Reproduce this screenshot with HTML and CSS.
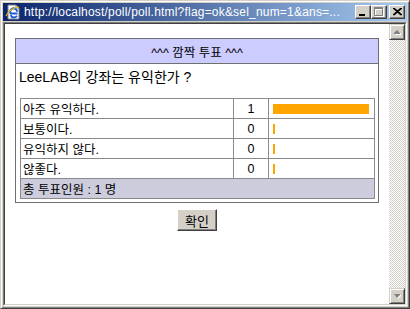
FILE: index.html
```html
<!DOCTYPE html>
<html lang="ko">
<head>
  <meta charset="UTF-8">
  <title>깜짝 투표</title>
  <link rel="stylesheet" href="styles.css">
</head>
<body>
  <div class="window">
    <div class="titlebar">
      <svg class="app-icon" width="16" height="16" viewBox="0 0 16 16">
        <path d="M3 1h8l3 3v11H3z" fill="#fff" stroke="#808080"/>
        <path d="M11 1v3h3" fill="none" stroke="#808080"/>
        <path d="M12.5 9.5H5.5a3.5 3.5 0 1 1 6.6-1.8M12 11.8a3.6 3.6 0 0 1-6.4-0.6" fill="none" stroke="#1e5bd6" stroke-width="2"/>
        <path d="M1 12c2-5 8-9 13-9" fill="none" stroke="#f0c000" stroke-width="1.2"/>
      </svg>
      <span class="title-text">http://localhost/poll/poll.html?flag=ok&amp;sel_num=1&amp;ans=...</span>
      <div class="title-buttons">
        <div class="tbtn">
          <svg width="8" height="7" viewBox="0 0 8 7"><rect x="0" y="5" width="6" height="2" fill="#000"/></svg>
        </div>
        <div class="tbtn">
          <svg width="10" height="10" viewBox="0 0 10 10">
            <path d="M1.5 1.5h8v8h-8z M1.5 2.5h8" fill="none" stroke="#fff"/>
            <path d="M0.5 0.5h8v8h-8z M0.5 1.5h8" fill="none" stroke="#808080"/>
          </svg>
        </div>
        <div class="tbtn close">
          <svg width="9" height="8" viewBox="0 0 9 8">
            <path d="M0 0l8 7M1 0l8 7M8 0L0 7M9 0L1 7" stroke="#000" stroke-width="1.1"/>
          </svg>
        </div>
      </div>
    </div>

    <div class="client">
      <div class="client-inner">
        <div class="page">
          <table class="poll">
            <tr><th class="poll-head">^^^ 깜짝 투표 ^^^</th></tr>
            <tr><td class="question">LeeLAB의 강좌는 유익한가 ?</td></tr>
            <tr>
              <td class="result-cell">
                <table class="results">
                  <tr>
                    <td class="answer">아주 유익하다.</td>
                    <td class="count">1</td>
                    <td class="bar-cell"><div class="bar" style="width: 96px"></div></td>
                  </tr>
                  <tr>
                    <td class="answer">보통이다.</td>
                    <td class="count">0</td>
                    <td class="bar-cell"><div class="bar" style="width: 2px"></div></td>
                  </tr>
                  <tr>
                    <td class="answer">유익하지 않다.</td>
                    <td class="count">0</td>
                    <td class="bar-cell"><div class="bar" style="width: 2px"></div></td>
                  </tr>
                  <tr>
                    <td class="answer">않좋다.</td>
                    <td class="count">0</td>
                    <td class="bar-cell"><div class="bar" style="width: 2px"></div></td>
                  </tr>
                  <tr>
                    <td class="total" colspan="3">총 투표인원 : 1 명</td>
                  </tr>
                </table>
              </td>
            </tr>
          </table>
          <div class="actions">
            <button class="ok-btn">확인</button>
          </div>
        </div>

        <div class="scrollbar">
          <div class="sbtn">
            <svg width="7" height="5" viewBox="0 0 7 5">
              <path d="M4 1l3 3v1H1V4z" fill="#fff"/>
              <path d="M3 0l3 3v1H0V3z" fill="#808080"/>
            </svg>
          </div>
          <div class="track"></div>
          <div class="sbtn">
            <svg width="7" height="5" viewBox="0 0 7 5">
              <path d="M1 1h6v1L4 5z" fill="#fff"/>
              <path d="M0 0h6v1L3 4z" fill="#808080"/>
            </svg>
          </div>
        </div>
      </div>
    </div>
  </div>
</body>
</html>
```

FILE: styles.css
```css
html, body {
  margin: 0;
  padding: 0;
}

body {
  background: #d4d0c8;
  font-family: "Liberation Sans", "Noto Sans CJK KR", sans-serif;
  font-size: 12px;
}

/* window frame */
.window {
  width: 410px;
  height: 309px;
  box-sizing: border-box;
  display: flex;
  flex-direction: column;
  background: #d4d0c8;
  border: 1px solid;
  border-color: #d4d0c8 #404040 #404040 #d4d0c8;
  box-shadow: inset 1px 1px #fff, inset -1px -1px #808080;
  padding: 2px;
}

.titlebar {
  height: 18px;
  display: flex;
  align-items: center;
  background: linear-gradient(to right, #0a246a, #a6caf0);
  color: #fff;
  padding-left: 2px;
}

.app-icon {
  flex: none;
  margin-right: 3px;
}

.title-text {
  flex: 1;
  white-space: nowrap;
  overflow: hidden;
  font-size: 12px;
  letter-spacing: 0.2px;
}

.title-buttons {
  display: flex;
  flex: none;
  margin-right: 2px;
}

.tbtn {
  width: 16px;
  height: 14px;
  box-sizing: border-box;
  display: flex;
  align-items: center;
  justify-content: center;
  background: #d4d0c8;
  border: 1px solid;
  border-color: #fff #404040 #404040 #fff;
  box-shadow: inset -1px -1px #808080;
}

.tbtn.close {
  margin-left: 2px;
}

.client {
  flex: 1;
  display: flex;
  margin-top: 1px;
  border: 1px solid;
  border-color: #808080 #fff #fff #808080;
}

.client-inner {
  flex: 1;
  display: flex;
  border: 1px solid;
  border-color: #404040 #d4d0c8 #d4d0c8 #404040;
}

.page {
  flex: 1;
  background: #fff;
  padding: 14px 10px;
  color: #000;
}

/* poll tables */
.poll {
  width: 100%;
  border-collapse: collapse;
  border: 1px solid #707070;
}

.poll-head {
  background: #ccccff;
  font-weight: normal;
  height: 24px;
  padding: 0;
  border-bottom: 1px solid #707070;
  text-align: center;
  font-size: 12.5px;
}

.question {
  padding: 2px 3px 0;
  height: 20px;
  font-size: 14px;
}

.result-cell {
  padding: 12px 3px 3px 4px;
}

.results {
  width: 100%;
  border-collapse: collapse;
  border: 1px solid #8a8a8a;
}

.results td {
  border: 1px solid #8a8a8a;
  height: 19px;
  padding: 0 2px;
  font-size: 12.5px;
}

.answer {
  width: 208px;
}

.count {
  width: 30px;
  text-align: center;
}

.results td.bar-cell {
  padding: 0 4px;
}

.bar {
  height: 10px;
  background: #ffa500;
}

.results td.total {
  background: #ccccdd;
  padding-left: 2px;
}

.actions {
  display: flex;
  justify-content: center;
  margin-top: 6px;
}

.ok-btn {
  width: 40px;
  height: 22px;
  padding: 0;
  background: #d4d0c8;
  font-family: "Liberation Sans", "Noto Sans CJK KR", sans-serif;
  font-size: 13px;
  border: 1px solid;
  border-color: #fff #404040 #404040 #fff;
  box-shadow: inset -1px -1px #808080;
}

/* scrollbar */
.scrollbar {
  width: 16px;
  display: flex;
  flex-direction: column;
}

.sbtn {
  height: 16px;
  box-sizing: border-box;
  display: flex;
  align-items: center;
  justify-content: center;
  background: #d4d0c8;
  border: 1px solid;
  border-color: #d4d0c8 #404040 #404040 #d4d0c8;
  box-shadow: inset 1px 1px #fff, inset -1px -1px #808080;
}

.track {
  flex: 1;
  background: repeating-conic-gradient(#d4d0c8 0 25%, #fff 0 50%) 0 0 / 2px 2px;
}
```
